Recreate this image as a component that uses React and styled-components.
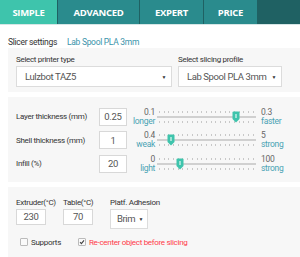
import React from 'react';
import styled, { createGlobalStyle } from 'styled-components';

const GlobalStyle = createGlobalStyle`
    body {
        margin: 0;
        background: #fff;
        font-family: "Roboto", "Liberation Sans", sans-serif;
        letter-spacing: -0.3px;
        color: #333;
    }
`;

const Page = styled.div`
    width: 300px;
    height: 257px;
    overflow: hidden;
    white-space: nowrap;
`;

const TabBar = styled.div`
    display: flex;
    height: 24px;
    background: #1f6163;
    border-bottom: 1px solid #d6e6e6;
`;

const Tab = styled.div`
    width: ${({ w }) => w}px;
    display: flex;
    align-items: center;
    justify-content: center;
    margin-right: 1px;
    background: ${({ active }) => (active ? '#3ec4ac' : '#2a8b8d')};
    color: #fff;
    font-family: "Open Sans", sans-serif;
    font-weight: 700;
    font-size: 9.5px;
    letter-spacing: -0.3px;
`;

const Body = styled.div`
    padding-left: 8px;
`;

const Heading = styled.div`
    display: flex;
    gap: 10px;
    height: 22px;
    align-items: flex-end;
    padding-bottom: 1px;
    font-size: 8.5px;
`;

const ProfileName = styled.span`
    color: #3a93aa;
`;

const Panel = styled.div`
    background: #f7f7f7;
    padding: ${({ pad }) => pad};
    margin-bottom: 5px;
`;

const SelectGrid = styled.div`
    display: grid;
    grid-template-columns: 156px 104px;
    column-gap: 6px;
`;

const FieldLabel = styled.div`
    font-size: 8px;
    color: #333;
    height: 13px;
    line-height: 13px;
`;

const SelectBox = styled.div`
    display: flex;
    align-items: center;
    justify-content: space-between;
    height: 21px;
    box-sizing: border-box;
    border: 1px solid #dcdcdc;
    background: #fff;
    padding: 0 5px 0 8px;
    font-size: 9.5px;
    letter-spacing: -0.4px;
    color: #555;
`;

const Caret = styled.span`
    font-size: 5px;
    color: #333;
`;

const SliderRow = styled.div`
    display: flex;
    align-items: center;
    height: 23.5px;
`;

const RowLabel = styled.div`
    width: 83px;
    font-size: 8px;
    color: #333;
`;

const NumInput = styled.div`
    width: ${({ w }) => w}px;
    height: ${({ h }) => h}px;
    box-sizing: border-box;
    border: 1px solid #d8d8d8;
    background: #fff;
    display: flex;
    align-items: center;
    justify-content: center;
    font-size: 9.5px;
    color: #555;
`;

const RangeLabel = styled.div`
    width: ${({ w }) => w}px;
    text-align: ${({ align }) => align};
    font-size: 8.5px;
    line-height: 9px;
    color: #666;
    span {
        display: block;
        color: #4aa3b4;
    }
`;

const Track = styled.div`
    position: relative;
    width: 99px;
    height: 14px;
    margin: 0 5px 0 2px;
`;

const Ticks = styled.div`
    position: absolute;
    left: 0;
    right: 0;
    top: ${({ top }) => top}px;
    display: flex;
    justify-content: space-between;
    padding: 0 2px;
    i {
        width: 1px;
        height: 2px;
        background: #c8c8c8;
    }
`;

const Rail = styled.div`
    position: absolute;
    left: 0;
    right: 0;
    top: 6px;
    height: 2px;
    background: #d0d0d0;
`;

const Thumb = styled.svg`
    position: absolute;
    top: 1px;
    margin-left: -4px;
`;

const TempRow = styled.div`
    display: flex;
`;

const TempField = styled.div`
    display: flex;
    flex-direction: column;
    width: 47px;
`;

const SmallSelect = styled(SelectBox)`
    width: 38px;
    height: 20px;
    padding: 0 4px 0 6px;
`;

const CheckRow = styled.div`
    display: flex;
    align-items: center;
    margin-top: 9px;
    padding-left: 4px;
    font-size: 8px;
    gap: 17px;
`;

const Check = styled.label`
    display: flex;
    align-items: center;
    gap: 3px;
    color: ${({ warn }) => (warn ? '#ff3b4a' : '#333')};
`;

const Box = styled.span`
    display: flex;
    align-items: center;
    justify-content: center;
    width: 6px;
    height: 6px;
    border: 1px solid #bbb;
    border-radius: 1px;
    background: #fafafa;
`;

const sliders = [
    { label: 'Layer thickness (mm)', value: '0.25', min: '0.1', minText: 'longer', max: '0.3', maxText: 'faster', pos: 0.8 },
    { label: 'Shell thickness (mm)', value: '1', min: '0.4', minText: 'weak', max: '5', maxText: 'strong', pos: 0.14 },
    { label: 'Infill (%)', value: '20', min: '0', minText: 'light', max: '100', maxText: 'strong', pos: 0.23 },
];

const Slider = ({ pos }) => (
    <Track>
        <Ticks top={1}>
            {Array.from({ length: 21 }).map((_, i) => <i key={i} />)}
        </Ticks>
        <Rail />
        <Ticks top={11}>
            {Array.from({ length: 21 }).map((_, i) => <i key={i} />)}
        </Ticks>
        <Thumb width="8" height="12" viewBox="0 0 8 12" style={{ left: `${pos * 100}%` }}>
            <path d="M0.5 1.5 Q0.5 0.5 1.5 0.5 H6.5 Q7.5 0.5 7.5 1.5 V8 L4 11.5 L0.5 8 Z" fill="#3ec4ac" />
            <rect x="3.5" y="3" width="1" height="4" fill="#fff" />
        </Thumb>
    </Track>
);

const App = () => {
    return (
        <Page>
            <GlobalStyle />
            <TabBar>
                <Tab w={57} active>SIMPLE</Tab>
                <Tab w={81}>ADVANCED</Tab>
                <Tab w={63}>EXPERT</Tab>
                <Tab w={53}>PRICE</Tab>
            </TabBar>
            <Body>
                <Heading>
                    <span>Slicer settings</span>
                    <ProfileName>Lab Spool PLA 3mm</ProfileName>
                </Heading>
                <Panel pad="5px 8px 5px">
                    <SelectGrid>
                        <FieldLabel>Select printer type</FieldLabel>
                        <FieldLabel>Select slicing profile</FieldLabel>
                        <SelectBox>
                            Lulzbot TAZ5<Caret>▼</Caret>
                        </SelectBox>
                        <SelectBox>
                            Lab Spool PLA 3mm<Caret>▼</Caret>
                        </SelectBox>
                    </SelectGrid>
                </Panel>
                <Panel pad="8px 8px 6px">
                    {sliders.map((s) => (
                        <SliderRow key={s.label}>
                            <RowLabel>{s.label}</RowLabel>
                            <NumInput w={28} h={18}>{s.value}</NumInput>
                            <RangeLabel w={28} align="right">
                                {s.min}
                                <span>{s.minText}</span>
                            </RangeLabel>
                            <Slider pos={s.pos} />
                            <RangeLabel w={30} align="left">
                                {s.max}
                                <span>{s.maxText}</span>
                            </RangeLabel>
                        </SliderRow>
                    ))}
                </Panel>
                <Panel pad="9px 8px 12px">
                    <TempRow>
                        <TempField>
                            <FieldLabel>Extruder(°C)</FieldLabel>
                            <NumInput w={30} h={16}>230</NumInput>
                        </TempField>
                        <TempField>
                            <FieldLabel>Table(°C)</FieldLabel>
                            <NumInput w={30} h={16}>70</NumInput>
                        </TempField>
                        <TempField>
                            <FieldLabel>Platf. Adhesion</FieldLabel>
                            <SmallSelect>
                                Brim<Caret>▼</Caret>
                            </SmallSelect>
                        </TempField>
                    </TempRow>
                    <CheckRow>
                        <Check>
                            <Box />
                            Supports
                        </Check>
                        <Check warn>
                            <Box>
                                <svg width="6" height="6" viewBox="0 0 6 6">
                                    <path d="M1 3.2 L2.4 4.6 L5 1.4" fill="none" stroke="#444" strokeWidth="1.1" />
                                </svg>
                            </Box>
                            Re-center object before slicing
                        </Check>
                    </CheckRow>
                </Panel>
            </Body>
        </Page>
    );
};

export default App;
